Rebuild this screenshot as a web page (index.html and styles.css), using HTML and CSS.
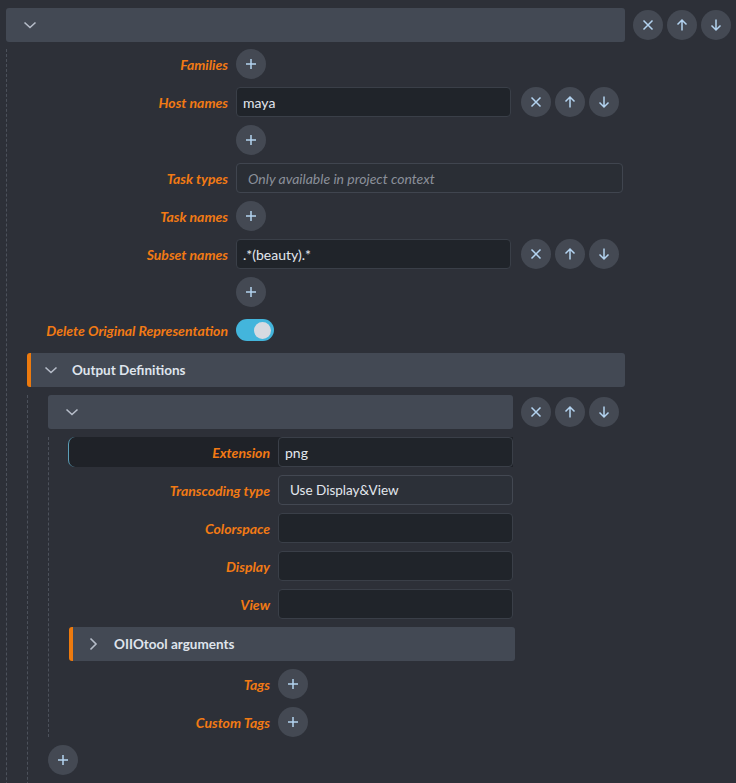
FILE: index.html
```html
<!DOCTYPE html>
<html>
<head>
<meta charset="utf-8">
<link rel="stylesheet" href="styles.css">
</head>
<body>
<div class="page">
  <div class="item root">
    <div class="item-head">
      <div class="bar bar-root"><svg class="chev" viewBox="0 0 14 14"><path d="M1.5 4.5L7 9.5L12.5 4.5"/></svg></div>
      <div class="btns">
        <span class="cbtn"><svg viewBox="0 0 14 14"><path d="M2.5 2.5L11.5 11.5M11.5 2.5L2.5 11.5"/></svg></span>
        <span class="cbtn"><svg viewBox="0 0 14 14"><path d="M7 2V12.5M2.5 6.5L7 2L11.5 6.5"/></svg></span>
        <span class="cbtn"><svg viewBox="0 0 14 14"><path d="M7 1.5V12M2.5 7.5L7 12L11.5 7.5"/></svg></span>
      </div>
    </div>
    <div class="item-body root-body">
      <div class="row">
        <div class="label">Families</div>
        <span class="cbtn"><svg viewBox="0 0 14 14"><path d="M7 2V12M2 7H12"/></svg></span>
      </div>
      <div class="row">
        <div class="label">Host names</div>
        <div class="input w-list">maya</div>
        <div class="btns btns-list">
          <span class="cbtn"><svg viewBox="0 0 14 14"><path d="M2.5 2.5L11.5 11.5M11.5 2.5L2.5 11.5"/></svg></span>
          <span class="cbtn"><svg viewBox="0 0 14 14"><path d="M7 2V12.5M2.5 6.5L7 2L11.5 6.5"/></svg></span>
          <span class="cbtn"><svg viewBox="0 0 14 14"><path d="M7 1.5V12M2.5 7.5L7 12L11.5 7.5"/></svg></span>
        </div>
      </div>
      <div class="row">
        <div class="label"></div>
        <span class="cbtn"><svg viewBox="0 0 14 14"><path d="M7 2V12M2 7H12"/></svg></span>
      </div>
      <div class="row">
        <div class="label">Task types</div>
        <div class="input disabled w-full">Only available in project context</div>
      </div>
      <div class="row">
        <div class="label">Task names</div>
        <span class="cbtn"><svg viewBox="0 0 14 14"><path d="M7 2V12M2 7H12"/></svg></span>
      </div>
      <div class="row">
        <div class="label">Subset names</div>
        <div class="input w-list">.*(beauty).*</div>
        <div class="btns btns-list">
          <span class="cbtn"><svg viewBox="0 0 14 14"><path d="M2.5 2.5L11.5 11.5M11.5 2.5L2.5 11.5"/></svg></span>
          <span class="cbtn"><svg viewBox="0 0 14 14"><path d="M7 2V12.5M2.5 6.5L7 2L11.5 6.5"/></svg></span>
          <span class="cbtn"><svg viewBox="0 0 14 14"><path d="M7 1.5V12M2.5 7.5L7 12L11.5 7.5"/></svg></span>
        </div>
      </div>
      <div class="row">
        <div class="label"></div>
        <span class="cbtn"><svg viewBox="0 0 14 14"><path d="M7 2V12M2 7H12"/></svg></span>
      </div>
      <div class="row">
        <div class="label">Delete Original Representation</div>
        <span class="toggle"><span class="knob"></span></span>
      </div>

      <div class="section">
        <div class="bar bar-accent bar-section">
          <svg class="chev" viewBox="0 0 14 14"><path d="M1.5 4.5L7 9.5L12.5 4.5"/></svg>
          <span class="bar-title">Output Definitions</span>
        </div>
        <div class="section-body">
          <div class="item">
            <div class="item-head">
              <div class="bar bar-item"><svg class="chev" viewBox="0 0 14 14"><path d="M1.5 4.5L7 9.5L12.5 4.5"/></svg></div>
              <div class="btns">
                <span class="cbtn"><svg viewBox="0 0 14 14"><path d="M2.5 2.5L11.5 11.5M11.5 2.5L2.5 11.5"/></svg></span>
                <span class="cbtn"><svg viewBox="0 0 14 14"><path d="M7 2V12.5M2.5 6.5L7 2L11.5 6.5"/></svg></span>
                <span class="cbtn"><svg viewBox="0 0 14 14"><path d="M7 1.5V12M2.5 7.5L7 12L11.5 7.5"/></svg></span>
              </div>
            </div>
            <div class="item-body nested-body">
              <div class="row active">
                <div class="label">Extension</div>
                <div class="input w-nested">png</div>
              </div>
              <div class="row">
                <div class="label">Transcoding type</div>
                <div class="input select w-nested">Use Display&amp;View</div>
              </div>
              <div class="row">
                <div class="label">Colorspace</div>
                <div class="input w-nested"></div>
              </div>
              <div class="row">
                <div class="label">Display</div>
                <div class="input w-nested"></div>
              </div>
              <div class="row">
                <div class="label">View</div>
                <div class="input w-nested"></div>
              </div>
              <div class="bar bar-accent bar-oiio">
                <svg class="chev" viewBox="0 0 14 14"><path d="M4.5 1.5L10 7L4.5 12.5"/></svg>
                <span class="bar-title">OIIOtool arguments</span>
              </div>
              <div class="row">
                <div class="label">Tags</div>
                <span class="cbtn"><svg viewBox="0 0 14 14"><path d="M7 2V12M2 7H12"/></svg></span>
              </div>
              <div class="row">
                <div class="label">Custom Tags</div>
                <span class="cbtn"><svg viewBox="0 0 14 14"><path d="M7 2V12M2 7H12"/></svg></span>
              </div>
            </div>
          </div>
          <div class="row-plain">
            <span class="cbtn"><svg viewBox="0 0 14 14"><path d="M7 2V12M2 7H12"/></svg></span>
          </div>
        </div>
      </div>
    </div>
  </div>
</div>
</body>
</html>
```
FILE: styles.css
```css
html, body {
  margin: 0;
  padding: 0;
  background: #2d3038;
  overflow: hidden;
  height: 783px;
}
body {
  font-family: Lato, "Noto Sans", sans-serif;
  color: #dfe4ec;
}
.page {
  padding: 8px 0 0 6px;
}
.item {
  display: flex;
  flex-direction: column;
}
.item-head {
  display: flex;
  align-items: center;
  gap: 8px;
}
.bar {
  box-sizing: border-box;
  height: 34px;
  background: #434954;
  border-radius: 3px;
  display: flex;
  align-items: center;
  gap: 14px;
  padding-left: 17px;
}
.bar-root { width: 619px; }
.bar-item { width: 465px; }
.bar-accent {
  border-left: 4px solid #ed7a0e;
  padding-left: 13px;
}
.bar-section { width: 598px; }
.bar-oiio { width: 446px; }
.bar-title {
  font-weight: 700;
  font-size: 13.5px;
  color: #dfe4ec;
}
.chev {
  width: 14px;
  height: 14px;
  flex: none;
}
.chev path {
  fill: none;
  stroke: #b6bdc9;
  stroke-width: 1.6;
}
.btns {
  display: flex;
  gap: 4px;
}
.btns-list {
  margin-left: 2px;
}
.cbtn {
  width: 30px;
  height: 30px;
  border-radius: 50%;
  background: #444953;
  display: inline-flex;
  align-items: center;
  justify-content: center;
  flex: none;
}
.cbtn svg {
  width: 14px;
  height: 14px;
}
.cbtn path {
  fill: none;
  stroke: #b3d3f0;
  stroke-width: 1.5;
}
.item-body {
  display: flex;
  flex-direction: column;
  gap: 8px;
  border-left: 1px dashed #4c515b;
}
.root-body {
  margin-top: 7px;
  padding-left: 20px;
  padding-bottom: 60px;
}
.nested-body {
  margin-top: 8px;
  padding-left: 20px;
  width: 444px;
}
.row {
  display: flex;
  align-items: center;
  gap: 8px;
  min-height: 30px;
}
.label {
  width: 201px;
  flex: none;
  text-align: right;
  font-weight: 700;
  font-style: italic;
  font-size: 14px;
  color: #f27a14;
}
.input {
  box-sizing: border-box;
  height: 30px;
  border: 1px solid #3a3f48;
  border-radius: 4px;
  background: #20242a;
  color: #e3e7ee;
  font-size: 14px;
  display: flex;
  align-items: center;
  padding-left: 6px;
}
.w-list { width: 275px; }
.w-full { width: 387px; }
.w-nested { width: 235px; }
.input.disabled {
  background: #2a2e35;
  border-color: #40454f;
  color: #8b909a;
  font-style: italic;
  padding-left: 11px;
}
.input.select {
  background: #2c3038;
  border-color: #434852;
  padding-left: 11px;
  font-size: 13.5px;
}
.row.active {
  background: #1f2228;
  border-left: 1px solid #5c9fb8;
  border-radius: 7px 0 0 7px;
  margin-left: -1px;
}
.toggle {
  width: 38px;
  height: 22px;
  border-radius: 11px;
  background: #43b5dc;
  display: inline-flex;
  align-items: center;
  justify-content: flex-end;
  padding-right: 3px;
  box-sizing: border-box;
}
.knob {
  width: 17px;
  height: 17px;
  border-radius: 50%;
  background: #d6dae1;
}
.section {
  display: flex;
  flex-direction: column;
}
.section-body {
  margin-top: 8px;
  border-left: 1px dashed #4c515b;
  padding-left: 20px;
  display: flex;
  flex-direction: column;
  gap: 8px;
  padding-bottom: 40px;
}
.row-plain {
  display: flex;
}
```
